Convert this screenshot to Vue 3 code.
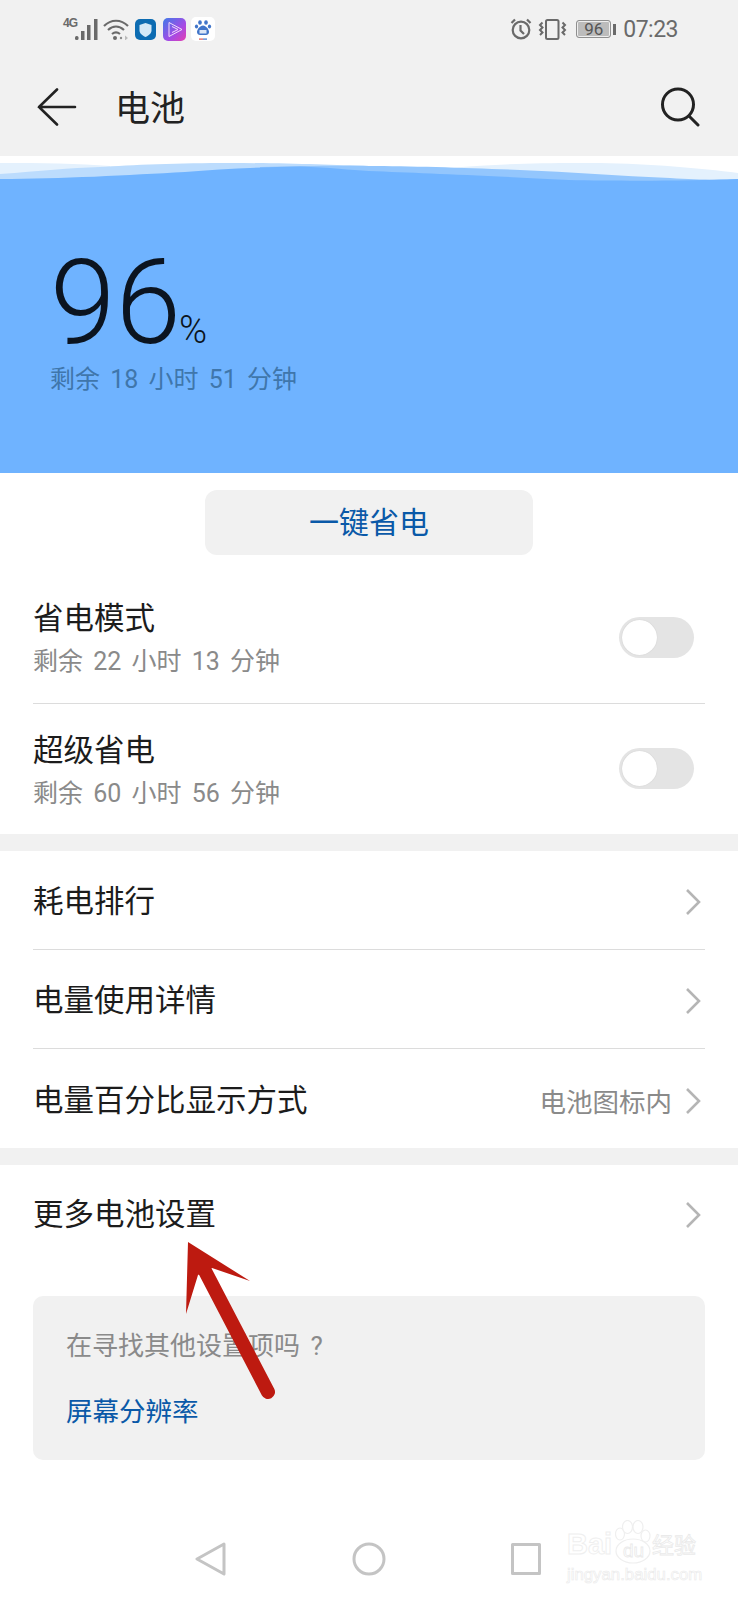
<template>
  <div class="screen">
    <div class="top">
      <div class="status">
        <div class="status-left">
          <span class="net">4G</span>
          <svg class="signal" width="24" height="21" viewBox="0 0 24 21">
            <rect x="0" y="17" width="3.500" height="4" rx="1.500" fill="#6a6a6a" />
            <rect x="6" y="12" width="3.500" height="9" fill="#6a6a6a" />
            <rect x="12" y="6" width="3.500" height="15" fill="#6a6a6a" />
            <rect x="19" y="0" width="3.500" height="21" fill="#6a6a6a" />
          </svg>
          <svg class="wifi" width="26" height="21" viewBox="0 0 26 21" fill="none" stroke="#6a6a6a" stroke-width="2.200">
            <path d="M1 7C8 0 18 0 25 7" />
            <path d="M5 11C10 6.500 16 6.500 21 11" />
            <path d="M9 15C11.500 13 14.500 13 17 15" />
            <circle cx="12" cy="19" r="2" fill="#6a6a6a" stroke="none" />
            <circle cx="18" cy="19" r="1.200" fill="#8a8a8a" stroke="none" />
            <path d="M22 16.500v5l3-2.500z" fill="#bbb" stroke="none" />
          </svg>
          <svg class="app-shield" width="21" height="21" viewBox="0 0 21 21">
            <rect width="21" height="21" rx="5" fill="#0d6cb2" />
            <path d="M10.500 4l6 2v5.500c0 3-2.800 5-6 6.500-3.200-1.500-6-3.500-6-6.500V6z" fill="#d4e9f7" />
          </svg>
          <svg class="app-play" width="23" height="23" viewBox="0 0 23 23">
            <defs>
              <linearGradient id="playGrad" x1="0" y1="0" x2="1" y2="1">
                <stop offset="0" stop-color="#3f7be8" />
                <stop offset="0.6" stop-color="#a44be6" />
                <stop offset="1" stop-color="#e53fb0" />
              </linearGradient>
            </defs>
            <rect width="23" height="23" rx="5" fill="url(#playGrad)" />
            <path d="M6 4.500l13 7-13 7zM9 8.500l6 3-6 3" fill="none" stroke="#f2dcfa" stroke-width="1" />
          </svg>
          <svg width="24" height="24" viewBox="0 0 24 24">
            <rect width="24" height="24" rx="5" fill="#fff" />
            <ellipse cx="9" cy="5.500" rx="1.800" ry="2.300" fill="#3f74c9" />
            <ellipse cx="15" cy="5.500" rx="1.800" ry="2.300" fill="#3f74c9" />
            <ellipse cx="5.500" cy="9.500" rx="1.600" ry="2" fill="#3f74c9" />
            <ellipse cx="18.500" cy="9.500" rx="1.600" ry="2" fill="#3f74c9" />
            <path d="M12 8.500c3 0 6 4 6 6.500 0 2-1.500 3-3 3H9c-1.500 0-3-1-3-3 0-2.500 3-6.500 6-6.500z" fill="#3f74c9" />
            <rect x="8.500" y="13" width="7" height="3.500" fill="#dbe6f6" />
            <rect x="8" y="21.500" width="4" height="1.200" fill="#d9534f" />
            <rect x="12" y="21.500" width="4" height="1.200" fill="#3f74c9" />
          </svg>
        </div>
        <div class="status-right">
          <svg class="alarm" width="22" height="22" viewBox="0 0 22 22" fill="none" stroke="#6a6a6a" stroke-width="2.200">
            <circle cx="11" cy="12" r="8.300" />
            <path d="M10.500 7v5.500l3.500 3.500" />
            <path d="M1.500 5L5 1.500M20.500 5L17 1.500" />
          </svg>
          <svg class="vibrate" width="29" height="21" viewBox="0 0 29 21" fill="none" stroke="#6a6a6a" stroke-width="2">
            <rect x="8" y="1" width="12.500" height="19" rx="1.500" />
            <path d="M4.500 3.500l-2.500 2.500 2.500 2.500-2.500 2.500 2.500 2.500-2.500 2.500" />
            <path d="M24.500 3.500l2.500 2.500-2.500 2.500 2.500 2.500-2.500 2.500 2.500 2.500" />
          </svg>
          <div class="battery">
            <div class="battery-body">96</div>
            <div class="battery-cap"></div>
          </div>
          <span class="time">07:23</span>
        </div>
      </div>
      <div class="appbar">
        <svg width="40" height="38" viewBox="0 0 40 38" fill="none" stroke="#222" stroke-width="2.600" stroke-linecap="round">
          <path d="M38 19H2M20 1.500L2 19l18 17.500" />
        </svg>
        <h1>电池</h1>
        <svg class="search" width="40" height="40" viewBox="0 0 40 40" fill="none" stroke="#222" stroke-width="3" stroke-linecap="round">
          <circle cx="18" cy="17.500" r="15.500" />
          <path d="M29 29l9 9" />
        </svg>
      </div>
    </div>

    <svg class="wave" width="738" height="26" viewBox="0 0 738 26">
      <rect width="738" height="26" fill="#fff" />
      <path d="M0 7C40 7 80 7.500 110 10V26H0z" fill="#e4f1fd" />
      <path d="M450 12C500 8 540 6.500 600 7C650 8 700 12 738 17V26H450z" fill="#e4f1fd" />
      <path d="M0 18C40 15 70 12 100 11C130 9 180 7 230 7C290 7 330 9 369 10V26H0z" fill="#bcdcfd" />
      <path d="M260 11C300 10 340 9.500 369 10C410 10 470 12 520 14C570 16 620 20 670 22C700 24 720 24 738 23V26H260z" fill="#93c6fd" />
      <path d="M0 23C60 23 130 19 185 16C220 13 260 11 300 10.500C330 11.500 350 14 369 15C420 17 470 19 569 24C620 25 690 25 738 23V26H0z" fill="#6fb3ff" />
    </svg>
    <section class="hero">
      <div class="level"><span class="num">96</span><span class="pct">%</span></div>
      <div class="remain">剩余 18 小时 51 分钟</div>
    </section>

    <div class="saver-wrap">
      <button class="saver">一键省电</button>
    </div>

    <div class="group">
      <div v-for="m in modes" :key="m.title" class="row row-toggle">
        <div>
          <div class="title">{{ m.title }}</div>
          <div class="sub">{{ m.sub }}</div>
        </div>
        <div class="toggle"><div class="knob"></div></div>
      </div>
    </div>

    <div class="gap"></div>

    <div class="group">
      <div v-for="l in links" :key="l.title" class="row row-link">
        <div class="title">{{ l.title }}</div>
        <div class="right">
          <span v-if="l.value" class="value">{{ l.value }}</span>
          <svg width="16" height="26" viewBox="0 0 16 26" fill="none" stroke="#b5b5b5" stroke-width="2.600">
            <path d="M2 1l12 12L2 25" />
          </svg>
        </div>
      </div>
    </div>

    <div class="gap"></div>

    <div class="group">
      <div class="row row-link row-last">
        <div class="title">更多电池设置</div>
        <div class="right">
          <svg width="16" height="26" viewBox="0 0 16 26" fill="none" stroke="#b5b5b5" stroke-width="2.600">
            <path d="M2 1l12 12L2 25" />
          </svg>
        </div>
      </div>
    </div>

    <div class="card">
      <div class="hint">在寻找其他设置项吗 ?</div>
      <div class="hint-link">屏幕分辨率</div>
    </div>

    <div class="nav">
      <svg width="32" height="34" viewBox="0 0 32 34" fill="none" stroke="#c4c4c4" stroke-width="3" stroke-linejoin="round">
        <path d="M29 2L2 17l27 15z" />
      </svg>
      <svg width="34" height="34" viewBox="0 0 34 34" fill="none" stroke="#c4c4c4" stroke-width="3">
        <circle cx="17" cy="17" r="15" />
      </svg>
      <svg width="30" height="32" viewBox="0 0 30 32" fill="none" stroke="#c4c4c4" stroke-width="3" stroke-linejoin="round">
        <rect x="1.500" y="1.500" width="27" height="29" />
      </svg>
    </div>

    <!-- red arrow annotation on top of the screenshot -->
    <svg class="arrow" width="100" height="170" viewBox="0 0 100 170">
      <path d="M19 30L82 151" fill="none" stroke="#bd1a10" stroke-width="14" stroke-linecap="round" />
      <path d="M2 1L64 40L26 27L12 34L0 73z" fill="#bd1a10" />
    </svg>

    <div class="watermark">
      <div class="wm-top">
        <span class="wm-bai">Bai</span>
        <span class="wm-paw">
          <svg width="36" height="44" viewBox="0 0 36 44" fill="#fff" stroke="#efefef" stroke-width="1.200">
            <ellipse cx="5" cy="14" rx="4.500" ry="6" />
            <ellipse cx="12.500" cy="7" rx="5" ry="6.500" />
            <ellipse cx="23" cy="7" rx="5" ry="6.500" />
            <ellipse cx="30.500" cy="16" rx="4.500" ry="6" />
            <ellipse cx="18" cy="31" rx="17" ry="12" />
          </svg>
          <span class="wm-du">du</span>
        </span>
        <span class="wm-cn">经验</span>
      </div>
      <div class="wm-url">jingyan.baidu.com</div>
    </div>
  </div>
</template>

<script setup>
const modes = [
  { title: "省电模式", sub: "剩余 22 小时 13 分钟" },
  { title: "超级省电", sub: "剩余 60 小时 56 分钟" },
];

const links = [
  { title: "耗电排行" },
  { title: "电量使用详情" },
  { title: "电量百分比显示方式", value: "电池图标内" },
];
</script>

<style>
html,
body {
  margin: 0;
  background: #fff;
}
</style>

<style scoped>
.screen {
  position: relative;
  width: 738px;
  height: 1600px;
  overflow: hidden;
  background: #fff;
  font-family: "Roboto", "Noto Sans CJK SC", sans-serif;
  color: #1c1c1c;
}

.top {
  height: 156px;
  background: #f1f1f1;
}

.status {
  display: flex;
  justify-content: space-between;
  align-items: center;
  height: 58px;
  padding: 0 60px 0 63px;
}

.status-left,
.status-right {
  display: flex;
  align-items: center;
}

.net {
  align-self: flex-start;
  width: 12px;
  margin-top: -1px;
  font-family: "Liberation Sans", sans-serif;
  font-size: 12px;
  font-weight: 700;
  letter-spacing: -1px;
  color: #6a6a6a;
}

.signal {
  margin-right: 4px;
}

.wifi {
  margin-right: 6px;
}

.app-shield {
  margin-right: 7px;
}

.app-play {
  margin-right: 5px;
}

.alarm {
  margin-right: 6px;
}

.vibrate {
  margin-right: 9px;
}

.battery {
  display: flex;
  align-items: center;
  margin-right: 7px;
}

.battery-body {
  width: 33px;
  height: 16px;
  border: 1px solid #8f8f8f;
  border-radius: 3px;
  background: #bcbcbc;
  box-shadow: inset 0 0 0 1px #eee;
  color: #555;
  font: 17px/16px "Roboto", sans-serif;
  text-align: center;
}

.battery-cap {
  width: 3px;
  height: 11px;
  margin-left: 2px;
  background: #6a6a6a;
}

.time {
  font: 23px "Roboto", sans-serif;
  letter-spacing: -0.5px;
  color: #6a6a6a;
}

.appbar {
  display: flex;
  align-items: center;
  height: 98px;
  padding: 0 37px;
}

.appbar h1 {
  margin: 6px 0 0 38px;
  font-size: 35px;
  font-weight: 400;
  line-height: 76px;
  color: #222;
}

.search {
  margin-left: auto;
  margin-right: 1px;
}

.wave {
  display: block;
}

.hero {
  height: 291px;
  padding-left: 50px;
  box-sizing: border-box;
  background: #6fb3ff;
}

.level {
  display: flex;
  align-items: baseline;
  height: 178px;
  padding-top: 68px;
  box-sizing: border-box;
  line-height: 106px;
}

.num {
  font: 300 118px/106px "Roboto", sans-serif;
  color: #0b1420;
}

.pct {
  margin-left: -2px;
  font: 300 38px "Roboto", sans-serif;
  color: #0b1420;
}

.remain {
  font-size: 25px;
  line-height: 40px;
  word-spacing: 4px;
  color: #3f76ab;
}

.saver-wrap {
  display: flex;
  justify-content: center;
  padding-top: 17px;
  height: 99px;
  box-sizing: border-box;
}

.saver {
  width: 328px;
  height: 65px;
  padding-bottom: 6px;
  border: none;
  border-radius: 12px;
  background: #f1f1f1;
  color: #0a59a8;
  font: 30px "Noto Sans CJK SC", sans-serif;
}

.group {
  padding: 0 33px;
}

.row {
  display: flex;
  justify-content: space-between;
  align-items: center;
  box-sizing: border-box;
  border-bottom: 1px solid #dcdcdc;
}

.row:last-child {
  border-bottom: none;
}

.row-toggle {
  height: 132px;
  padding-top: 4px;
}

.row-toggle:last-child {
  height: 130px;
}

.row-link {
  height: 99px;
  padding-top: 4px;
}

.row-last {
  height: 131px;
  padding-top: 0;
  padding-bottom: 32px;
}

.title {
  font-size: 30.500px;
  line-height: 44px;
  color: #1c1c1c;
}

.sub {
  margin-top: 1px;
  font-size: 25px;
  line-height: 40px;
  word-spacing: 4px;
  color: #8a8a8a;
}

.toggle {
  width: 75px;
  height: 41px;
  margin-right: 11px;
  margin-bottom: 5px;
  border-radius: 21px;
  background: #e4e4e4;
}

.knob {
  width: 35px;
  height: 35px;
  margin: 3px 0 0 3px;
  border-radius: 50%;
  background: #fff;
  box-shadow: 0 0 1px #bdbdbd;
}

.gap {
  height: 17px;
  background: #f1f1f1;
}

.right {
  display: flex;
  align-items: center;
  margin-right: 4px;
}

.right svg {
  margin-left: 13px;
}

.value {
  font-size: 26.500px;
  color: #8a8a8a;
}

.card {
  height: 164px;
  margin: 0 33px;
  padding: 0 33px;
  box-sizing: border-box;
  border-radius: 10px;
  background: #f1f1f1;
}

.hint {
  padding-top: 29px;
  font-size: 26px;
  line-height: 42px;
  word-spacing: 4px;
  color: #8a8a8a;
}

.hint-link {
  margin-top: 24px;
  font-size: 26.500px;
  line-height: 42px;
  color: #0a59a8;
}

.nav {
  display: flex;
  align-items: center;
  justify-content: space-between;
  width: 346px;
  margin: 82px 0 0 195px;
}

.arrow {
  position: absolute;
  left: 186px;
  top: 1241px;
}

.watermark {
  position: absolute;
  left: 567px;
  top: 1520px;
  width: 134px;
  font-family: "Liberation Sans", sans-serif;
  color: #fff;
  -webkit-text-stroke: 1px #efefef;
}

.wm-top {
  display: flex;
  align-items: flex-end;
  height: 44px;
}

.wm-bai {
  width: 48px;
  font-size: 29px;
  font-weight: 700;
  line-height: 40px;
}

.wm-paw {
  position: relative;
  width: 37px;
  height: 44px;
}

.wm-paw svg {
  display: block;
}

.wm-du {
  position: absolute;
  left: 8px;
  top: 20px;
  font-size: 19px;
  line-height: 22px;
  -webkit-text-stroke: 0.8px #eaeaea;
}

.wm-cn {
  font: 22px/42px "Noto Sans CJK SC", sans-serif;
  -webkit-text-stroke: 0.8px #eaeaea;
}

.wm-url {
  margin-top: 1px;
  font-size: 16.800px;
  line-height: 20px;
  -webkit-text-stroke: 0.6px #eaeaea;
}
</style>
